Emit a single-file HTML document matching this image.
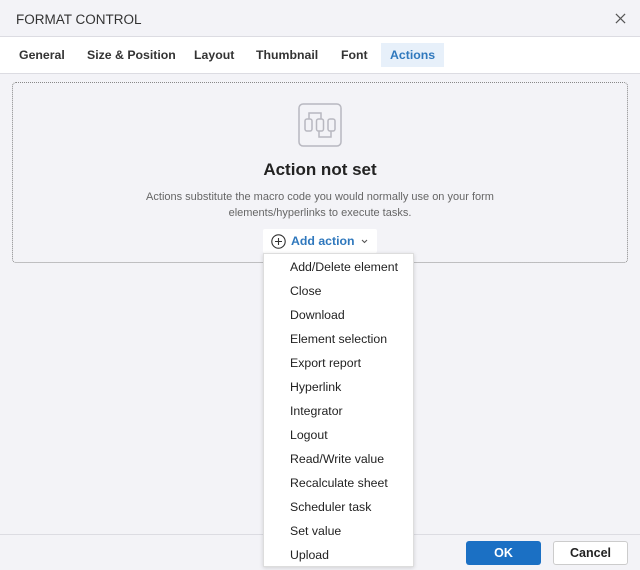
<!DOCTYPE html>
<html><head><style>
*{margin:0;padding:0;box-sizing:border-box}
body{width:640px;height:570px;background:#f3f3f7;font-family:"Liberation Sans",sans-serif;position:relative;overflow:hidden;color:#222}
.hdr{position:absolute;left:0;top:0;width:640px;height:37px;border-bottom:1px solid #dcdce2;background:#f3f3f7}
.hdr .t{position:absolute;left:16px;top:12px;font-size:13.5px;color:#333}
.hdr .x{position:absolute;right:14px;top:13px}
.tabs{position:absolute;left:0;top:37px;width:640px;height:37px;background:#fff;border-bottom:1px solid #dcdce2}
.tab{position:absolute;top:6px;height:24px;line-height:24px;font-size:12.3px;font-weight:bold;color:#333;padding:0 9px}
.tab.a{background:#e7f0fa;color:#2f78bd}
.box{position:absolute;left:12px;top:82px;width:616px;height:181px;border:1px dotted #888;border-radius:4px}
.ic{position:absolute;left:298px;top:103px;width:44px;height:44px}
h2{position:absolute;left:0;width:640px;top:160px;text-align:center;font-size:17px;font-weight:bold;color:#222}
.desc{position:absolute;left:0;width:640px;top:189px;text-align:center;font-size:11px;color:#666;line-height:16px}
.add{position:absolute;left:263px;top:229px;width:114px;height:24px;background:#fff;border-radius:2px;font-size:12.3px;font-weight:bold;color:#2f78bd;line-height:24px}
.menu{position:absolute;left:263px;top:253px;width:151px;height:314px;background:#fff;border:1px solid #ddd;box-shadow:0 1px 4px rgba(0,0,0,.15)}
.menu div{position:absolute;left:26px;font-size:12.3px;color:#222}
.foot{position:absolute;left:0;top:534px;width:640px;border-top:1px solid #dcdce2}
.ok{position:absolute;left:466px;top:541px;width:75px;height:24px;background:#1b70c4;border-radius:3px;color:#fff;font-weight:bold;font-size:12.5px;text-align:center;line-height:24px}
.cn{position:absolute;left:553px;top:541px;width:75px;height:24px;background:#fff;border:1px solid #ccc;border-radius:3px;color:#222;font-weight:bold;font-size:12.5px;text-align:center;line-height:22px}
</style></head><body>
<div class="hdr"><span class="t">FORMAT CONTROL</span>
<svg class="x" width="11" height="11" viewBox="0 0 12 12"><path d="M1 1L11 11M11 1L1 11" stroke="#555" stroke-width="1.3"/></svg></div>
<div class="tabs">
<span class="tab" style="left:10px">General</span>
<span class="tab" style="left:78px">Size &amp; Position</span>
<span class="tab" style="left:185px">Layout</span>
<span class="tab" style="left:247px">Thumbnail</span>
<span class="tab" style="left:332px">Font</span>
<span class="tab a" style="left:381px">Actions</span>
</div>
<div class="box"></div>
<svg class="ic" viewBox="0 0 44 44"><rect x="1" y="1" width="42" height="42" rx="4" fill="none" stroke="#b8b8c0" stroke-width="1.5"/>
<path d="M11 16V10H23V16M21 28V34H33V28" fill="none" stroke="#b8b8c0" stroke-width="1.5"/>
<rect x="7" y="16" width="7" height="12" rx="2" fill="none" stroke="#b8b8c0" stroke-width="1.5"/>
<rect x="18.5" y="16" width="7" height="12" rx="2" fill="none" stroke="#b8b8c0" stroke-width="1.5"/>
<rect x="30" y="16" width="7" height="12" rx="2" fill="none" stroke="#b8b8c0" stroke-width="1.5"/></svg>
<h2>Action not set</h2>
<div class="desc">Actions substitute the macro code you would normally use on your form<br>elements/hyperlinks to execute tasks.</div>
<div class="add"><svg style="position:absolute;left:8px;top:5px" width="15" height="15" viewBox="0 0 15 15"><circle cx="7.5" cy="7.5" r="6.7" fill="none" stroke="#333" stroke-width="1.1"/><path d="M7.5 4v7M4 7.5h7" stroke="#333" stroke-width="1.1"/></svg>
<span style="position:absolute;left:28px">Add action</span>
<svg style="position:absolute;left:98px;top:10px" width="7" height="5" viewBox="0 0 7 5"><path d="M1 1l2.5 2.5L6 1" fill="none" stroke="#555" stroke-width="1.1"/></svg></div>
<div class="foot"></div>
<div class="ok">OK</div><div class="cn">Cancel</div>
<div class="menu">
<div style="top:6px">Add/Delete element</div>
<div style="top:30px">Close</div>
<div style="top:54px">Download</div>
<div style="top:78px">Element selection</div>
<div style="top:102px">Export report</div>
<div style="top:126px">Hyperlink</div>
<div style="top:150px">Integrator</div>
<div style="top:174px">Logout</div>
<div style="top:198px">Read/Write value</div>
<div style="top:222px">Recalculate sheet</div>
<div style="top:246px">Scheduler task</div>
<div style="top:270px">Set value</div>
<div style="top:294px">Upload</div>
</div>
</body></html>
